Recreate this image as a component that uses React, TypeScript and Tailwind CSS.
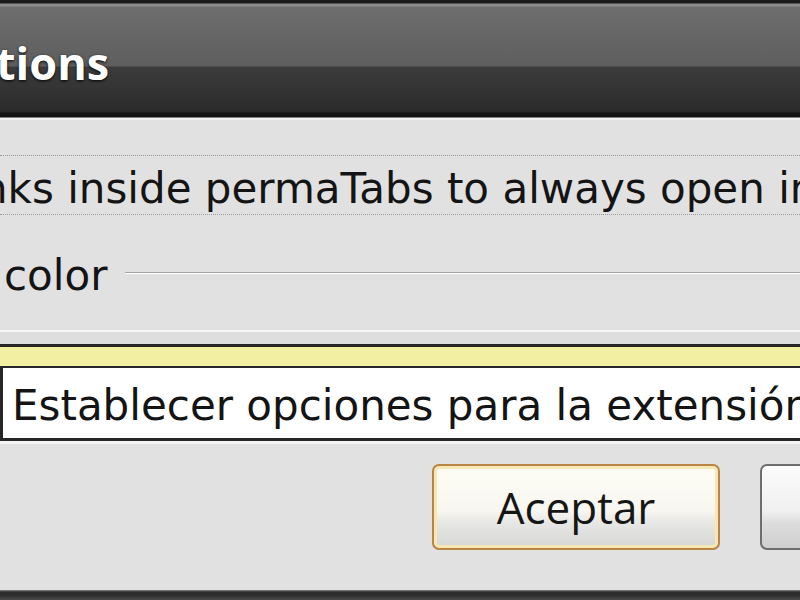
import React from 'react'

// Zoomed view of an options dialog (permaTabs)
function TitleBar() {
  return (
    <div className="h-[120px] shrink-0 bg-[linear-gradient(to_bottom,#1b1b1b_0px,#1b1b1b_3px,#8c8c8c_4px,#8c8c8c_6px,#6e6e6e_7px,#5e5e5e_66px,#3c3c3c_67px,#2a2a2a_112px,#141414_113px,#141414_117px,#f2f2f2_118px,#f2f2f2_120px)]">
      <div
        className="ml-[-4px] pt-[33px] text-[45px] font-bold leading-[60px] text-white [text-shadow:0_1px_3px_#000]"
        style={{ fontFamily: '"Open Sans", sans-serif' }}
      >
        tions
      </div>
    </div>
  )
}

function OptionsBody() {
  return (
    <div className="flex h-[210px] shrink-0 flex-col pt-[35px]">
      {/* checkbox label with focus outline */}
      <div className="overflow-hidden whitespace-nowrap border-y border-dotted border-[#9a9a9a] pb-[1px] pt-[9px]">
        <span className="ml-[-19px] text-[42px] leading-[48px] text-[#141414]">
          nks inside permaTabs to always open in
        </span>
      </div>
      {/* group header */}
      <div className="mt-[37px] flex h-[48px] items-start">
        <span className="ml-[4px] text-[42px] leading-[48px] text-[#141414]">color</span>
        <div className="ml-[18px] mt-[20px] flex-1 border-b border-t border-b-white border-t-[#a2a2a2]" />
      </div>
    </div>
  )
}

function InputArea() {
  return (
    <div className="shrink-0">
      <div className="h-[2px] bg-[#f7f7f7]" />
      <div className="h-[12px] bg-[#dedede]" />
      <div className="border-y-[3px] border-[#262626]">
        <div className="h-[19px] bg-[#f3efa2]" />
        <div className="flex h-[72px] items-start border-l-[3px] border-t-[2px] border-[#262626] bg-white pl-[9px] pt-[14px]">
          <span className="whitespace-nowrap text-[42px] leading-[48px] text-[#141414]">
            Establecer opciones para la extensión
          </span>
        </div>
      </div>
    </div>
  )
}

function Footer() {
  return (
    <div className="flex flex-1 flex-col">
      <div className="h-[3px] bg-[#f4f4f4]" />
      <div className="flex flex-1 items-start gap-[40px] pl-[432px] pt-[20px]">
        <button
          className="flex h-[86px] w-[288px] shrink-0 items-center justify-center rounded-[7px] border-2 border-[#b98444] bg-[linear-gradient(to_bottom,#fdfcf4_0%,#f7f6f0_55%,#e6e6e4_70%,#d6d6d6_100%)] text-[44px] leading-[60px] text-[#161616] shadow-[inset_0_0_0_3px_#f6e7b4]"
          style={{ fontFamily: '"Open Sans", sans-serif' }}
        >
          Aceptar
        </button>
        <button
          className="h-[86px] w-[120px] shrink-0 rounded-[7px] border-2 border-[#6e6e6e] bg-[linear-gradient(to_bottom,#fbfbfb_0%,#f0f0f0_55%,#dcdcdc_70%,#cfcfcf_100%)]"
          aria-label="Cancelar"
        />
      </div>
      <div className="h-[10px] bg-[linear-gradient(to_bottom,#8a8a8a_0px,#2c2c2c_2px,#2c2c2c_5px,#4a4a4a_10px)]" />
    </div>
  )
}

export default function App() {
  return (
    <div
      className="flex h-[600px] w-[800px] flex-col overflow-hidden bg-[#e1e1e1]"
      style={{ fontFamily: '"DejaVu Sans", sans-serif' }}
    >
      <TitleBar />
      <OptionsBody />
      <InputArea />
      <Footer />
    </div>
  )
}
